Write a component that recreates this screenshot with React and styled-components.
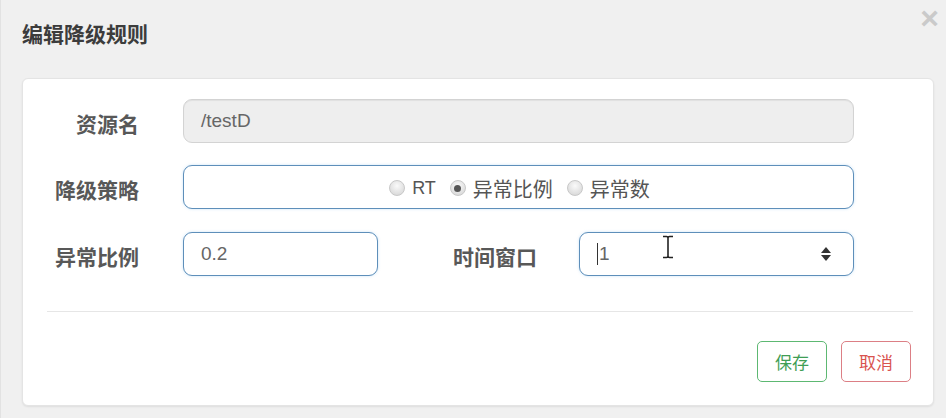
import React from "react";
import styled, { createGlobalStyle } from "styled-components";

const Global = createGlobalStyle`
  html, body { margin: 0; padding: 0; background: #efefef; }
  body { font-family: "Liberation Sans", "Noto Sans CJK SC", sans-serif; }
  * { box-sizing: border-box; }
`;

const Modal = styled.div`
  position: relative;
  width: 946px;
  height: 418px;
  background: #f0f0f0;
  border-left: 1px solid #e2e2e2;
  padding: 0 0 0 21px;
  display: flex;
  flex-direction: column;
`;

const Header = styled.div`
  height: 78px;
  display: flex;
  align-items: flex-start;
  padding-top: 19px;
`;

const Title = styled.h4`
  margin: 0;
  font-family: "Noto Sans CJK SC", sans-serif;
  font-size: 21px;
  line-height: 28px;
  font-weight: 700;
  color: #3c3c3c;
`;

const Close = styled.span`
  position: absolute;
  right: 7px;
  top: 3px;
  font-family: "Liberation Sans", sans-serif;
  font-size: 32px;
  font-weight: 700;
  color: #cacaca;
  line-height: 30px;
`;

const Card = styled.div`
  width: 912px;
  height: 328px;
  background: #fff;
  border: 1px solid #e4e4e4;
  border-radius: 6px;
  box-shadow: 0 1px 2px rgba(0, 0, 0, 0.08);
  padding: 20px 22px 0 0;
  display: flex;
  flex-direction: column;
`;

const Row = styled.div`
  display: flex;
  align-items: center;
  height: 44px;
  margin-bottom: ${(p) => p.$mb || 0}px;
`;

const Label = styled.label`
  width: ${(p) => p.$w || 116}px;
  margin-right: ${(p) => p.$gap || 44}px;
  padding-top: 4px;
  text-align: right;
  font-family: "Noto Sans CJK SC", sans-serif;
  font-size: 21px;
  line-height: 28px;
  font-weight: 700;
  color: #585858;
`;

const Field = styled.div`
  position: relative;
  width: ${(p) => p.$w}px;
  height: 44px;
  border-radius: 9px;
  border: 1px solid ${(p) => (p.$disabled ? "#d3d3d3" : "#5e8fba")};
  background: ${(p) => (p.$disabled ? "#eeeeee" : "#fff")};
  box-shadow: ${(p) =>
    p.$disabled ? "inset 0 1px 1px rgba(0,0,0,.06)" : "0 0 3px rgba(102,175,233,.35)"};
  display: flex;
  align-items: center;
  justify-content: ${(p) => (p.$center ? "center" : "flex-start")};
  padding: 0 17px;
  font-family: "Liberation Sans", "Noto Sans CJK SC", sans-serif;
  font-size: 19px;
  color: #666;
`;

const RadioGroup = styled.div`
  display: flex;
  align-items: center;
  padding-left: 2px;
  padding-top: 2px;
`;

const RadioItem = styled.span`
  display: inline-flex;
  align-items: center;
  margin-right: 14px;
  font-family: "Liberation Sans", "Noto Sans CJK SC", sans-serif;
  font-size: 19px;
  color: #555;
  &:last-child { margin-right: 0; }
`;

const RadioText = styled.span`
  font-size: ${(p) => (p.$cjk ? 20 : 18)}px;
`;

const RadioDot = styled.span`
  width: 16px;
  height: 16px;
  border-radius: 50%;
  border: 1px solid #c8c8c8;
  background: radial-gradient(circle at 50% 35%, #fafafa, #d2d2d2);
  margin-right: 7px;
  display: inline-flex;
  align-items: center;
  justify-content: center;
  &::after {
    content: "";
    width: 7px;
    height: 7px;
    border-radius: 50%;
    background: ${(p) => (p.$checked ? "#555" : "transparent")};
  }
`;

const Caret = styled.span`
  width: 1px;
  height: 22px;
  background: #333;
  margin-right: 1px;
`;

const Spinner = styled.span`
  position: absolute;
  right: 22px;
  top: 50%;
  transform: translateY(-50%);
  display: flex;
  flex-direction: column;
  gap: 2px;
`;

const IBeam = styled.svg`
  position: absolute;
  left: 82px;
  top: 2px;
`;

const Divider = styled.hr`
  margin: 35px 0 0 24px;
  border: 0;
  border-top: 1px solid #e6e6e6;
  width: 866px;
`;

const Footer = styled.div`
  display: flex;
  justify-content: flex-end;
  gap: 14px;
  margin-top: 29px;
`;

const Button = styled.button`
  width: 70px;
  height: 41px;
  border-radius: 5px;
  background: #fff;
  border: 1px solid ${(p) => (p.$tone === "ok" ? "#5db872" : "#dc7f85")};
  color: ${(p) => (p.$tone === "ok" ? "#3f9e55" : "#d9534f")};
  font-family: "Noto Sans CJK SC", sans-serif;
  font-size: 17px;
  padding: 0;
`;

export default function App() {
  return (
    <>
      <Global />
      <Modal>
        <Header>
          <Title>编辑降级规则</Title>
          <Close>×</Close>
        </Header>
        <Card>
          <Row $mb={22}>
            <Label>资源名</Label>
            <Field $w={671} $disabled>/testD</Field>
          </Row>
          <Row $mb={23}>
            <Label>降级策略</Label>
            <Field $w={671} $center>
              <RadioGroup>
                <RadioItem><RadioDot /><RadioText>RT</RadioText></RadioItem>
                <RadioItem><RadioDot $checked /><RadioText $cjk>异常比例</RadioText></RadioItem>
                <RadioItem><RadioDot /><RadioText $cjk>异常数</RadioText></RadioItem>
              </RadioGroup>
            </Field>
          </Row>
          <Row>
            <Label>异常比例</Label>
            <Field $w={195}>0.2</Field>
            <Label $w={159} $gap={42}>时间窗口</Label>
            <Field $w={275}>
              <Caret />1
              <IBeam width="12" height="24" viewBox="0 0 12 24">
                <path d="M1 1.5h3.5c1 0 1.5.5 1.5 1.5v18c0 1-.5 1.5-1.5 1.5H1M11 1.5H7.5C6.5 1.5 6 2 6 3v18c0 1 .5 1.5 1.5 1.5H11" fill="none" stroke="#222" strokeWidth="1.6" />
              </IBeam>
              <Spinner>
                <svg width="10" height="6" viewBox="0 0 10 6"><path d="M0 6L5 0 10 6z" fill="#333" /></svg>
                <svg width="10" height="6" viewBox="0 0 10 6"><path d="M0 0l5 6L10 0z" fill="#333" /></svg>
              </Spinner>
            </Field>
          </Row>
          <Divider />
          <Footer>
            <Button $tone="ok">保存</Button>
            <Button $tone="cancel">取消</Button>
          </Footer>
        </Card>
      </Modal>
    </>
  );
}
